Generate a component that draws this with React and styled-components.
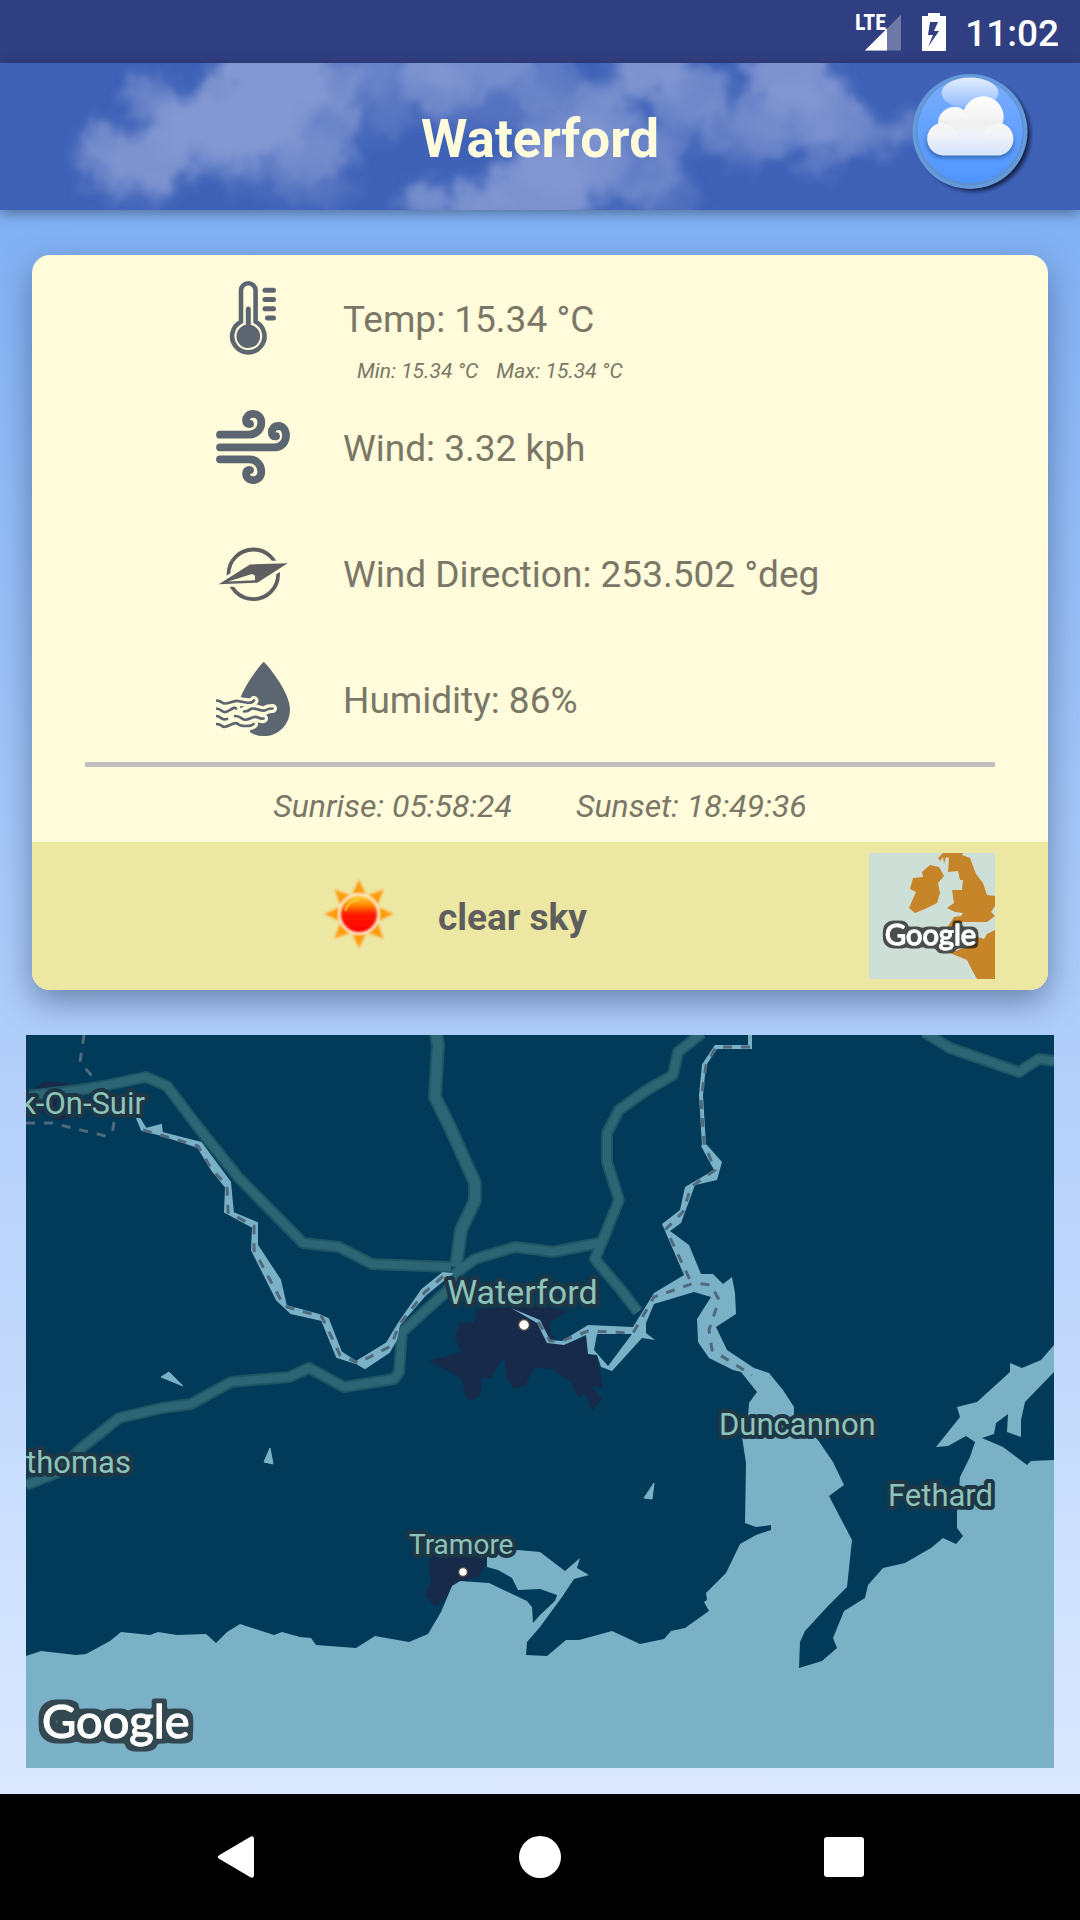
import React from "react";
import styled, { createGlobalStyle } from "styled-components";

const Global = createGlobalStyle`
  *, *::before, *::after { box-sizing: border-box; }
  body { margin: 0; font-family: Roboto, "Noto Sans", sans-serif; }
`;

const Screen = styled.div`
  display: flex;
  flex-direction: column;
  min-height: 100vh;
  background: linear-gradient(#80b0f4 10%, #dce9ff 94%);
`;

const StatusBar = styled.header`
  display: flex;
  align-items: center;
  justify-content: flex-end;
  height: 63px;
  padding-right: 21px;
  background: #303f81;
  color: #fff;
`;

const SignalIcon = styled.svg`
  width: 48px;
  height: 42px;
  margin-right: 18px;
`;

const NetworkLabel = styled.text`
  font: 700 22px "Roboto Condensed", "Liberation Sans Narrow", Roboto, sans-serif;
  fill: #fff;
`;

const BatteryIcon = styled.svg`
  width: 26px;
  height: 42px;
  margin-right: 18px;
`;

const Clock = styled.time`
  font-size: 37px;
  line-height: 44px;
  font-weight: 500;
  padding-top: 4px;
`;

const Toolbar = styled.div`
  position: relative;
  display: grid;
  grid-template-columns: 1fr auto 1fr;
  align-items: center;
  height: 147px;
  padding: 0 47px;
  background: #3f62b7;
  box-shadow: 0 4px 12px rgba(0, 0, 0, 0.35);
`;

const Sky = styled.svg`
  position: absolute;
  inset: 0;
  width: 100%;
  height: 100%;
`;

const Title = styled.h1`
  position: relative;
  grid-column: 2;
  margin: 0;
  padding-top: 4px;
  font-size: 53px;
  line-height: 60px;
  font-weight: 700;
  color: #fffbdb;
`;

const Badge = styled.svg`
  position: relative;
  justify-self: end;
  width: 126px;
  height: 126px;
`;

const Card = styled.section`
  margin: 45px 32px;
  border-radius: 18px;
  overflow: hidden;
  background: #fffbdb;
  color: #7a7767;
  box-shadow: 0 12px 32px rgba(40, 60, 100, 0.5);
`;

const Readings = styled.ul`
  list-style: none;
  margin: 0;
  padding: 0;
`;

const Reading = styled.li`
  display: flex;
  align-items: flex-start;
  gap: 53px;
  padding: 26px 53px 26px 184px;
`;

const ReadingIcon = styled.svg`
  flex: none;
  width: 74px;
  height: 74px;
`;

const Value = styled.div`
  font-size: 37px;
  line-height: 78px;
  height: 74px;
`;

const Range = styled.div`
  display: flex;
  gap: 18px;
  margin: 0 0 -26px 14px;
  font-size: 21px;
  line-height: 33px;
  height: 29px;
  font-style: italic;
`;

const Divider = styled.hr`
  height: 5px;
  margin: 0 53px;
  border: 0;
  background: #bfbfbf;
`;

const SunTimes = styled.div`
  display: flex;
  justify-content: center;
  gap: 64px;
  padding: 20px 0 17px;
  font-size: 32px;
  line-height: 38px;
  font-style: italic;
`;

const Conditions = styled.footer`
  display: flex;
  align-items: center;
  gap: 37px;
  height: 148px;
  padding: 0 53px 0 285px;
  background: #ece7a2;
`;

const SunIcon = styled.svg`
  width: 84px;
  height: 84px;
  margin-bottom: 4px;
`;

const Summary = styled.strong`
  flex: 1;
  padding-top: 4px;
  font-size: 37px;
  line-height: 44px;
  font-weight: 700;
  color: #5e5e5e;
`;

const MiniMap = styled.svg`
  width: 126px;
  height: 126px;
  background: #cddfd6;
`;

const MapPanel = styled.main`
  flex: 1;
  display: flex;
  margin: 0 26px 26px;
`;

const MapSvg = styled.svg`
  width: 100%;
  height: 733px;
  background: #013b59;
`;

const PlaceName = styled.text`
  font: 400 ${(p) => p.$size}px Roboto, sans-serif;
  fill: #8ec3b9;
  stroke: #1d3746;
  stroke-width: 8px;
  stroke-linejoin: round;
  paint-order: stroke;
`;

const Brand = styled.text`
  font: 400 ${(p) => p.$size}px Lato, sans-serif;
  fill: #fff;
  stroke: #fff;
  stroke-width: 1px;
`;

const NavBar = styled.nav`
  display: flex;
  justify-content: center;
  height: 126px;
  background: #000;
`;

const NavButton = styled.button`
  display: grid;
  place-items: center;
  width: 304px;
  padding: 0;
  border: 0;
  background: none;
  color: #fff;
  svg { width: 52px; height: 52px; }
`;

const clouds = [
  [102, 76, 20, 16, 0.7], [98, 102, 22, 24, 0.6], [148, 98, 42, 32, 0.9], [146, 32, 24, 18, 0.6],
  [190, 64, 46, 32, 0.9], [275, 10, 56, 50, 1], [235, 60, 70, 40, 1], [265, 92, 90, 30, 0.45],
  [312, 62, 46, 46, 0.6], [345, 32, 20, 28, 0.7], [372, 6, 30, 28, 0.6], [142, 130, 26, 16, 0.4],
  [315, 122, 40, 26, 0.3], [435, 24, 36, 30, 0.7], [470, 2, 64, 26, 0.8], [545, 20, 36, 34, 0.5],
  [500, 45, 76, 22, 0.3], [388, 52, 22, 24, 0.35], [600, 50, 30, 28, 0.8], [570, 94, 58, 40, 0.7],
  [427, 136, 20, 20, 0.8], [478, 142, 30, 22, 0.9], [540, 126, 56, 40, 0.9], [625, 100, 54, 44, 0.5],
  [668, 84, 22, 30, 0.4], [660, 134, 38, 22, 0.3], [652, 6, 42, 26, 0.9], [692, 34, 38, 30, 0.7],
  [722, 62, 28, 24, 0.5], [622, 24, 22, 20, 0.5], [790, 12, 44, 38, 0.9], [800, 52, 52, 36, 0.6],
  [836, 56, 32, 34, 0.6], [762, 60, 28, 34, 0.5], [820, 90, 22, 22, 0.4], [876, 74, 30, 16, 0.5],
  [912, 66, 26, 14, 0.5], [742, 88, 16, 22, 0.35],
];

const SkyClouds = () => (
  <Sky viewBox="0 0 1080 147" preserveAspectRatio="xMidYMid slice" aria-hidden="true">
    <defs>
      <filter id="wisps" x="-5%" y="-20%" width="110%" height="140%">
        <feGaussianBlur stdDeviation="7" result="b" />
        <feTurbulence type="fractalNoise" baseFrequency="0.04" numOctaves="4" seed="7" result="n" />
        <feDisplacementMap in="b" in2="n" scale="34" xChannelSelector="R" yChannelSelector="G" />
        <feGaussianBlur stdDeviation="2" />
      </filter>
    </defs>
    <g filter="url(#wisps)" fill="#8398d2">
      {clouds.map(([cx, cy, rx, ry, o], i) => (
        <ellipse key={i} cx={cx} cy={cy} rx={rx} ry={ry} opacity={o} />
      ))}
    </g>
  </Sky>
);

const WeatherBadge = () => (
  <Badge viewBox="0 0 126 126" role="img" aria-label="Weather">
    <defs>
      <linearGradient id="disc" x2="0" y2="1">
        <stop offset="0" stopColor="#79aeff" />
        <stop offset="1" stopColor="#4f95ff" />
      </linearGradient>
      <linearGradient id="gloss" x2="0" y2="1">
        <stop offset="0" stopColor="#fff" stopOpacity="0.8" />
        <stop offset="1" stopColor="#fff" stopOpacity="0.2" />
      </linearGradient>
      <linearGradient id="fluff" gradientUnits="userSpaceOnUse" x1="0" y1="23" x2="0" y2="82">
        <stop offset="0" stopColor="#fff" />
        <stop offset="0.45" stopColor="#efefef" />
        <stop offset="0.6" stopColor="#f1f3f8" />
        <stop offset="1" stopColor="#d6e3fb" />
      </linearGradient>
      <linearGradient id="puff" x2="0" y2="1">
        <stop offset="0" stopColor="#fff" />
        <stop offset="0.55" stopColor="#fff" stopOpacity="0" />
      </linearGradient>
      <filter id="soft" x="-20%" y="-20%" width="150%" height="150%">
        <feGaussianBlur stdDeviation="2.2" />
      </filter>
      <filter id="edge" x="-10%" y="-10%" width="120%" height="120%">
        <feGaussianBlur stdDeviation="0.7" />
      </filter>
    </defs>
    <circle cx="67" cy="61" r="56" fill="#10182e" opacity="0.9" filter="url(#soft)" />
    <g filter="url(#edge)">
      <circle cx="63" cy="57.5" r="57.5" fill="#659bdc" />
      <circle cx="63" cy="57.5" r="54" fill="#5f90cf" />
      <circle cx="63" cy="56.5" r="52.5" fill="url(#disc)" />
    </g>
    <ellipse cx="63" cy="19" rx="28.5" ry="15.5" fill="url(#gloss)" />
    <path d="M36 84H90a16 16 0 0 0 6-31L30 53a16 16 0 0 0 6 31Z" fill="#2e5c9e" opacity="0.8" filter="url(#soft)" />
    <g filter="url(#edge)">
      <path d="M36 81.500A16.500 16.500 0 0 1 31 49.500A16.500 16.500 0 0 1 57 36A19.500 19.500 0 0 1 95.500 49.500A16.500 16.500 0 0 1 91 81.500Z" fill="url(#fluff)" />
      <circle cx="47" cy="49" r="15" fill="url(#puff)" opacity="0.5" />
      <circle cx="35" cy="65" r="15.500" fill="url(#puff)" opacity="0.5" />
      <circle cx="91" cy="65" r="15.500" fill="url(#puff)" opacity="0.5" />
    </g>
  </Badge>
);

const SLATE = "#5c6670";

const Thermometer = () => (
  <ReadingIcon viewBox="0 0 74 74" fill="none" stroke={SLATE} strokeLinecap="round" aria-hidden="true">
    <path d="M25 40.700V9.300a7.300 7 0 0 1 14.600 0V40.700a16.200 16.200 0 1 1-14.600 0Z" strokeWidth="4.600" />
    <circle cx="32.300" cy="55.300" r="11.800" fill={SLATE} stroke="none" />
    <path d="M32.300 28V48" strokeWidth="5" />
    <path d="M49 9.300H57.500M49 18.500H57.500M49 27.700H57.500M51.500 37H57.500" strokeWidth="5" />
  </ReadingIcon>
);

const Wind = () => (
  <ReadingIcon viewBox="0 0 74 74" fill="none" stroke={SLATE} strokeWidth="7.800" strokeLinecap="round" aria-hidden="true">
    <path d="M4 24.700H33C40.500 24.700 45.300 19 45.300 12.500C45.300 7 41.500 3.900 37 3.900C32.500 3.900 30 7 30 10.500C30 13 31.500 14.300 34 14" />
    <path d="M4 37.300H59C66 37.300 70 31.500 70 25.500C70 19.500 66.500 16 62.500 16C58 16 55.800 19 55.800 22.500C55.800 25.500 57.500 26.700 60 26.300" />
    <path d="M4 49.300H33C40.500 49.300 45.300 55 45.300 61.500C45.300 67 41.500 70.100 37 70.100C32.500 70.100 30 67 30 63.500C30 61 31.500 59.700 34 60" />
  </ReadingIcon>
);

const Compass = () => (
  <ReadingIcon viewBox="0 -1 74 74" aria-hidden="true">
    <circle cx="37.300" cy="37.300" r="24.800" fill="none" stroke="#5f5f62" strokeWidth="3.800" />
    <path d="M2.700 47.300L34 27.300L71.700 26.300L41.300 45.700Z" fill="#fffbdb" stroke="#fffbdb" strokeWidth="6" />
    <path fillRule="evenodd" d="M2.700 47.300L34 27.500L71.700 26.300L41.300 45.700ZM12 44.500L39 43.200V38.500L36 37Z" fill="#5f5f62" />
  </ReadingIcon>
);

const WAVES = [
  "M0 38.500Q4 38.500 6 40.500T14 40.500T22 39T30 40.500T38 38.500",
  "M0 46.500Q3 46.500 6 49T14 48T20 46.500",
  "M28 49.500Q32 49.500 34 47.500T42 47.500T50 48T56.500 46.500",
  "M0 54Q3 54 5 56T11 57",
  "M19 54Q23 54 26 56.500T34 56.500T42 55.500T47.500 56.500",
  "M0 62Q4 62 6 64T14 63T22 62T30 64T37.500 62",
].join("");

const Humidity = () => (
  <ReadingIcon viewBox="0 0 74 74" fill="none" strokeLinecap="round" aria-hidden="true">
    <path d="M47.700 0C49 0 74 29 74 48a26 26 0 0 1-52.300 0C21.700 30 46.400 0 47.700 0Z" fill={SLATE} />
    <path d={WAVES} stroke="#fffbdb" strokeWidth="9" />
    <path d="M20 44V58L31 69" stroke="#fffbdb" strokeWidth="6" />
    <path d={WAVES} stroke={SLATE} strokeWidth="2.700" />
  </ReadingIcon>
);

const Sun = () => (
  <SunIcon viewBox="0 0 84 84" aria-hidden="true">
    <defs>
      <linearGradient id="core" x2="0" y2="1">
        <stop offset="0" stopColor="#ffd23c" />
        <stop offset="0.250" stopColor="#ff8a00" />
        <stop offset="0.500" stopColor="#ff1a00" />
        <stop offset="1" stopColor="#ff0000" />
      </linearGradient>
      <filter id="glow" x="-20%" y="-20%" width="140%" height="140%">
        <feGaussianBlur stdDeviation="1.2" />
      </filter>
    </defs>
    <g fill="#ff9c0c" stroke="#ffb040" strokeWidth="1" filter="url(#glow)">
      {[0, 45, 90, 135, 180, 225, 270, 315].map((a) => (
        <path key={a} d="M42 8L48.500 22H35.500Z" transform={`rotate(${a} 42 42)`} />
      ))}
    </g>
    <circle cx="42" cy="42" r="21" fill="#ffe2c0" filter="url(#glow)" />
    <circle cx="42" cy="42" r="18" fill="url(#core)" filter="url(#glow)" />
    <path d="M28.500 38A14.500 14.500 0 0 1 41 28" fill="none" stroke="#ffd83a" strokeWidth="2.500" strokeLinecap="round" opacity="0.600" />
  </SunIcon>
);

const OutlineFilter = ({ id, radius, color }) => (
  <filter id={id} x="-15%" y="-25%" width="130%" height="150%">
    <feMorphology in="SourceAlpha" operator="dilate" radius={radius} result="grown" />
    <feGaussianBlur in="grown" stdDeviation="1.5" result="smooth" />
    <feComponentTransfer in="smooth" result="crisp">
      <feFuncA type="linear" slope="4" intercept="-1.5" />
    </feComponentTransfer>
    <feFlood floodColor={color} />
    <feComposite in2="crisp" operator="in" result="outline" />
    <feMerge>
      <feMergeNode in="outline" />
      <feMergeNode in="SourceGraphic" />
    </feMerge>
  </filter>
);

const LocatorMap = () => (
  <MiniMap viewBox="0 0 126 126" role="img" aria-label="Region map">
    <defs>
      <OutlineFilter id="outline-small" radius={3} color="rgba(20, 22, 22, 0.7)" />
    </defs>
    <g fill="#c78529">
      <path d="M53 19L61 12L70 14L75 23L69 30L71 40L68 50L56 56L46 60L40 55L47 39L41 36L44 25L54 24Z" />
      <path d="M74 0L69 5L71 8L74 4L75 11L77 4L80 5L79 19L89 18L91 27L94 27L93 37L83 37L85 50L78 55L86 59L94 60L92 63L85 64L78 75L85 73L94 69L118 69L126 63L122 59L126 53V43L118 42L114 30L107 21L101 5L93 2L94 0Z" />
      <path d="M126 77L118 81L115 86L106 83L108 90L81 100L98 107L103 117L108 126H126Z" />
    </g>
    <Brand $size={29} x="16" y="92" filter="url(#outline-small)">Google</Brand>
  </MiniMap>
);

const ROADS = [
  "M26 1096L79 1090L103 1086L146 1077L167 1086L198 1127L238 1177L303 1243L339 1247L372 1264L451 1267",
  "M26 1485L59 1472L79 1450L119 1418L162 1408L191 1404L231 1382L289 1377L309 1368L344 1387L394 1379L399 1372L402 1332L448 1290L456 1273L475 1259L515 1247L540 1250L552 1252L599 1243",
  "M702 1033L678 1052L673 1075L647 1090L619 1110L607 1133V1162L619 1200L595 1259L621 1290L638 1312",
  "M924 1032L950 1048L1019 1072L1039 1059L1054 1061",
];
const TRUNK = "M436 1033L438 1045L435 1097L448 1123L475 1183V1200L461 1230L456 1267";

const SEA =
  "M704 1143L701 1146L714 1170L685 1187L680 1210L662 1224L684 1275L654 1293L633 1327L588 1325L562 1341L550 1340L540 1320L511 1308L537 1323L547 1343L564 1345L586 1335L588 1354L597 1355L601 1367L612 1371L642 1338L655 1340L646 1333V1323L654 1304L694 1292L711 1297L697 1319L698 1342L709 1358L733 1370L741 1372L757 1392L749 1403L748 1417L742 1437L746 1463L745 1523L756 1527L771 1525V1530L756 1535L740 1544L726 1573L706 1593L707 1600L704 1602L709 1611L685 1628L671 1631L664 1639L640 1644L612 1631L579 1640H566L547 1656L526 1655L527 1642L540 1627L562 1597L574 1579L589 1575L577 1568L580 1558L565 1571L540 1552L518 1550L487 1557V1567L498 1570L512 1578L518 1590L540 1589L557 1595L555 1601L540 1615L533 1623L532 1607L527 1601L489 1583L460 1581L452 1586L441 1612L428 1634L409 1642L375 1636L356 1648L316 1645L311 1638L300 1637L282 1632L274 1635L240 1624L227 1632L216 1643L206 1634L177 1635L158 1632L150 1635L121 1632L110 1641L86 1654L76 1655L41 1651L26 1656V1768H1054V1460L1031 1461L1027 1465L1003 1447L982 1438L994 1434L996 1423L1008 1414L1007 1432L1021 1437V1420L1025 1402L1054 1372V1345L1041 1360L1022 1368L1010 1363V1372L977 1402L957 1407L960 1417L936 1447L948 1446L966 1436L975 1442L970 1457L960 1477L957 1512V1528L963 1536L956 1544L943 1538L931 1548L905 1563L883 1568L868 1585L865 1598L844 1611L833 1638L837 1648L822 1661L799 1668L800 1642L805 1631L828 1606L847 1587L852 1540L829 1496L844 1485L833 1462L818 1440L794 1417V1407L783 1390L769 1373L754 1368L727 1350L716 1327L736 1314L735 1293L732 1277L723 1284L713 1274H701L689 1245L670 1231L681 1223L695 1185L717 1180L722 1162L707 1145Z";

const SUIR =
  "M137 1118L142 1130L162 1135L198 1147L212 1170L226 1187L225 1212L253 1227L252 1250L277 1300L291 1313L322 1320L337 1357L356 1363L365 1368L389 1352L396 1340L399 1325L425 1295L451 1274L443 1273L422 1290L399 1323L387 1343L356 1362L341 1352L328 1319L319 1315L286 1306L280 1280L257 1245V1223L233 1213L230 1182L201 1143L162 1133L161 1125L146 1129L139 1118Z";

const BORDER = [
  "M143 1130L198 1146L212 1170L227 1185L228 1212L254 1226L254 1250L284 1306L322 1317L340 1355L358 1363L391 1346L399 1325L425 1292L447 1273",
  "M750 1047H716L706 1065L701 1100L704 1143L715 1170L691 1187L683 1212L666 1229L690 1280",
  "M538 1322L550 1341L562 1341L588 1331L633 1333L654 1297L694 1283L711 1285L719 1300L709 1330L712 1350L752 1375",
];

const RiverMap = () => (
  <MapSvg viewBox="26 1035 1028 733" preserveAspectRatio="xMidYMid slice" role="img" aria-label="Map of Waterford">
    <defs>
      <OutlineFilter id="outline-large" radius={5} color="#31474f" />
    </defs>
    <g fill="#182a4a">
      <path d="M477 1309L474 1323L460 1322L455 1337L461 1352L429 1361L461 1378L465 1395L470 1401L481 1394L482 1378H492L497 1367L504 1358L507 1378L514 1389L525 1386L534 1368L552 1369L571 1382L578 1397L586 1394L592 1411L602 1398L590 1386L603 1388L597 1357L588 1354V1337L562 1345L550 1333V1322L569 1311L540 1306Z" />
      <path d="M432 1555L429 1568L431 1582L425 1595L435 1607L447 1597L458 1582L479 1577L487 1560V1555Z" />
      <path d="M26 1096L43 1082H59L79 1087L72 1117L59 1121L41 1112L26 1108Z" />
    </g>
    <g fill="none" strokeLinejoin="round">
      {ROADS.map((d) => <path key={d} d={d} stroke="#1f5665" strokeWidth="12" />)}
      <path d={TRUNK} stroke="#1f5665" strokeWidth="14" />
      {ROADS.map((d) => <path key={d} d={d} stroke="#2c6675" strokeWidth="8" />)}
      <path d={TRUNK} stroke="#2c6675" strokeWidth="10" />
    </g>
    <g fill="#7bb1c6" stroke="#7bb1c6" strokeWidth="1">
      <path d={SEA} stroke="none" />
      <path d={SUIR} strokeWidth="2" />
      <path d="M161 1377L169 1372L183 1386ZM270 1448L264 1462L273 1464ZM654 1483L644 1498L652 1499Z" />
      <path d="M750 1033V1047H716L704 1065L701 1095L704 1145" fill="none" strokeWidth="4" />
    </g>
    <path d="M597 1334H632L608 1366L594 1350Z" fill="#013b59" />
    <g fill="none" stroke="#4f6a7e" strokeWidth="3" strokeDasharray="9 9">
      {BORDER.map((d) => <path key={d} d={d} />)}
      <path d="M84 1035L80 1062L97 1082M26 1123H52L114 1138M114 1122L112 1135" />
    </g>
    <g fill="#fff" stroke="#4a443f" strokeWidth="1.500">
      <circle cx="524" cy="1325" r="5.500" />
      <circle cx="463" cy="1572" r="4.500" />
    </g>
    <PlaceName $size={31} x="145" y="1114" textAnchor="end">k-On-Suir</PlaceName>
    <PlaceName $size={31} x="26" y="1473">thomas</PlaceName>
    <PlaceName $size={34} x="447" y="1304">Waterford</PlaceName>
    <PlaceName $size={31} x="719" y="1435">Duncannon</PlaceName>
    <PlaceName $size={31} x="888" y="1506">Fethard</PlaceName>
    <PlaceName $size={28} x="409" y="1554">Tramore</PlaceName>
    <Brand $size={47} x="42" y="1738" filter="url(#outline-large)">Google</Brand>
  </MapSvg>
);

const readings = [
  { Icon: Thermometer, text: "Temp: 15.34 °C", range: ["Min: 15.34 °C", "Max: 15.34 °C"] },
  { Icon: Wind, text: "Wind: 3.32 kph" },
  { Icon: Compass, text: "Wind Direction: 253.502 °deg" },
  { Icon: Humidity, text: "Humidity: 86%" },
];

export default function App() {
  return (
    <>
      <Global />
      <Screen>
        <StatusBar>
          <SignalIcon viewBox="0 0 48 42" aria-hidden="true">
            <path d="M10 39.500L46 3.500V39.500Z" fill="#fff" opacity="0.300" />
            <path d="M10 39.500L32 17.500V39.500Z" fill="#fff" />
            <NetworkLabel x="0" y="19">LTE</NetworkLabel>
          </SignalIcon>
          <BatteryIcon viewBox="0 0 26 42" aria-hidden="true">
            <path fillRule="evenodd" fill="#fff" d="M7 2H19V5H25V40H1V5H7ZM9 11L7 24H12L7 36L18 20H13L17 11Z" />
          </BatteryIcon>
          <Clock>11:02</Clock>
        </StatusBar>
        <Toolbar>
          <SkyClouds />
          <Title>Waterford</Title>
          <WeatherBadge />
        </Toolbar>
        <Card>
          <Readings>
            {readings.map(({ Icon, text, range }) => (
              <Reading key={text}>
                <Icon />
                <div>
                  <Value>{text}</Value>
                  {range && <Range>{range.map((r) => <span key={r}>{r}</span>)}</Range>}
                </div>
              </Reading>
            ))}
          </Readings>
          <Divider />
          <SunTimes>
            <span>Sunrise: 05:58:24</span>
            <span>Sunset: 18:49:36</span>
          </SunTimes>
          <Conditions>
            <Sun />
            <Summary>clear sky</Summary>
            <LocatorMap />
          </Conditions>
        </Card>
        <MapPanel>
          <RiverMap />
        </MapPanel>
        <NavBar>
          <NavButton type="button" aria-label="Back">
            <svg viewBox="0 0 52 52" fill="currentColor"><path d="M9.500 24L40 6Q44 4 44 8V44Q44 48 40 46L9.500 28Q6 26 9.500 24Z" /></svg>
          </NavButton>
          <NavButton type="button" aria-label="Home">
            <svg viewBox="0 0 52 52" fill="currentColor"><circle cx="26" cy="26" r="21" /></svg>
          </NavButton>
          <NavButton type="button" aria-label="Recent apps">
            <svg viewBox="0 0 52 52" fill="currentColor"><rect x="6" y="6" width="40" height="40" rx="3" /></svg>
          </NavButton>
        </NavBar>
      </Screen>
    </>
  );
}
